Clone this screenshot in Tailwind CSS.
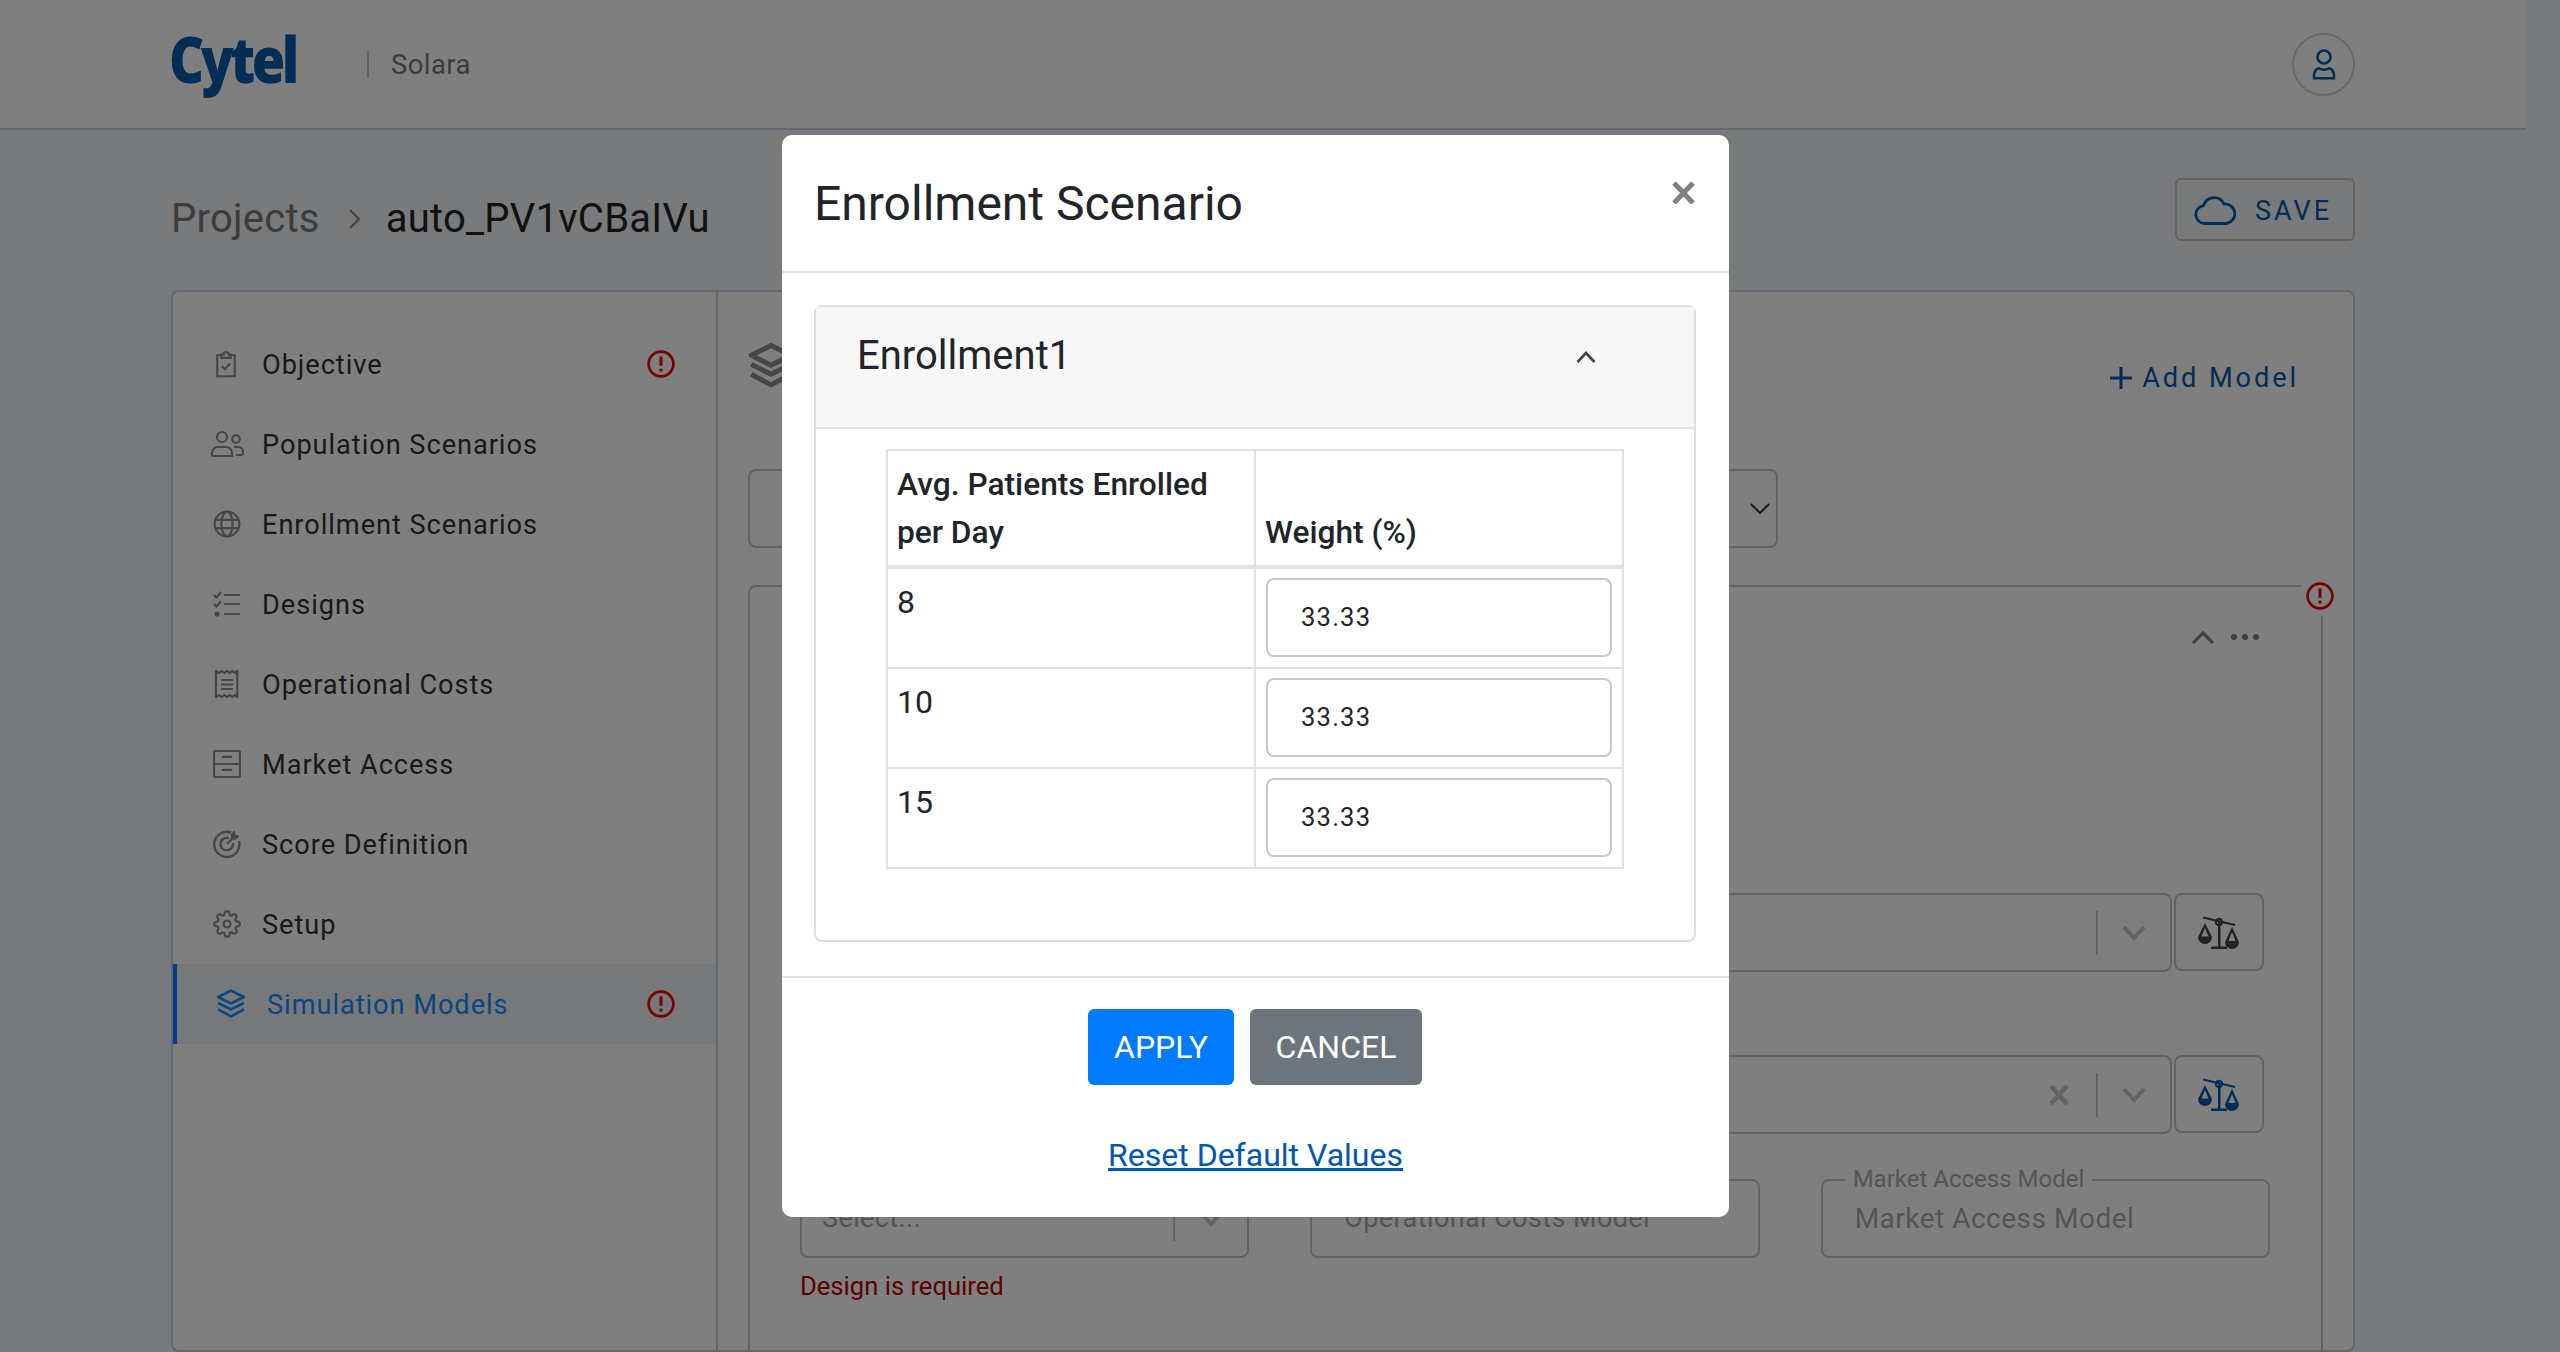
<!DOCTYPE html>
<html lang="en"><head><meta charset="utf-8"><title>Solara</title>
<script src="https://cdn.jsdelivr.net/npm/@tailwindcss/browser@4"></script></head>
<body class="font-['Roboto',sans-serif]">
<div class="relative h-[1352px] w-[2560px] overflow-hidden bg-[#f1f4f8]">
  <div class="w-[2526px]">
    <header class="flex h-[130px] items-center justify-between border-b-2 border-[#bed4e6] bg-white pl-[169px] pr-[171px]">
      <div class="flex items-center">
        <span class="w-[127px] origin-left -translate-y-[6px] scale-x-[0.86] font-['Open_Sans',sans-serif] text-[63px] leading-none font-extrabold tracking-[-4px] whitespace-nowrap text-[#045aa8]">Cytel</span>
        <span class="ml-[71px] h-[27px] w-[2px] bg-[#c8c8c8]"></span>
        <span class="ml-[22px] mt-[2px] text-[27.500px] tracking-[0.4px] text-[#777]">Solara</span>
      </div>
      <div class="flex h-[63px] w-[63px] items-center justify-center rounded-full border-2 border-[#bed4e6] text-[#045aa8]">
        <svg class="h-[34px] w-[34px]" viewBox="0 0 24 24" fill="none" stroke="currentColor" stroke-width="1.8"><circle cx="12" cy="7" r="4.6"/><path d="M5 22v-2.5a5 5 0 0 1 3.5-4.5c2 1.3 5 1.3 7 0a5 5 0 0 1 3.5 4.5V22z"/></svg>
      </div>
    </header>
    <div class="flex h-[160px] items-start justify-between pl-[171px] pr-[171px] pt-[48px]">
      <div class="mt-[9px] flex h-[63px] items-center text-[40px] tracking-[0.25px]">
        <span class="text-[#787878]">Projects</span>
        <svg class="ml-[28px] mr-[24px] h-[24px] w-[14px] text-[#888]" viewBox="0 0 14 24" fill="none" stroke="currentColor" stroke-width="2.4"><path d="M2 3l9 9-9 9"/></svg>
        <span class="text-[#222]">auto_PV1vCBaIVu</span>
      </div>
      <button class="flex h-[63px] w-[180px] items-center rounded-[6px] border-2 border-[#c4c4c4] pl-[17px] text-[27px] tracking-[3px] text-[#045aa8]">
        <svg class="h-[30px] w-[42px]" viewBox="0 0 42 30" fill="none" stroke="currentColor" stroke-width="2.8"><path d="M11 28.5a9 9 0 0 1-1.5-17.9A11 11 0 0 1 30 9a9.8 9.8 0 0 1 2 19.5z"/></svg>
        <span class="ml-[19px] mt-[4px]">SAVE</span>
      </button>
    </div>
    <main class="mx-[171px] flex h-[1062px] rounded-[8px] border-2 border-[#bed4e6] bg-white">
      <nav class="w-[545px] shrink-0 border-r-2 border-[#bed4e6] pt-[32px] text-[27.200px] tracking-[0.95px] text-[#333]">
        <a class="flex h-[80px] items-center pl-[39px] pr-[41px]"><svg class="h-[28px] w-[28px] text-[#8c8c8c]" viewBox="0 0 24 24" fill="none" stroke="currentColor" stroke-width="1.9"><path d="M8 4.5H4.5v18h15v-18H16"/><path d="M8 3.8h2a2 2 0 0 1 4 0h2v3H8z"/><path d="M8.5 14l2.5 2.5 4.5-5"/></svg><span class="ml-[22px] flex-1 pt-[2px]">Objective</span><svg class="h-[28px] w-[28px] text-[#f00000]" viewBox="0 0 24 24" fill="none" stroke="currentColor" stroke-width="2.300"><circle cx="12" cy="12" r="10.6"/><path d="M12 5.5v8" stroke-width="2.6"/><path d="M12 16v2.500" stroke-width="2.6"/></svg></a>
        <a class="flex h-[80px] items-center pl-[37px] pr-[41px]"><svg class="h-[28px] w-[34px] text-[#8c8c8c]" viewBox="0 0 34 28" fill="none" stroke="currentColor" stroke-width="2.2"><circle cx="12" cy="7" r="5"/><circle cx="26" cy="9" r="3.8"/><path d="M2 25v-2a6 6 0 0 1 6-6h8a6 6 0 0 1 6 6v3H3a1 1 0 0 1-1-1z"/><path d="M24 17h4a5 5 0 0 1 5 5v1.500a1.500 1.500 0 0 1-1.500 1.500H26"/></svg><span class="ml-[18px] flex-1 pt-[2px]">Population Scenarios</span></a>
        <a class="flex h-[80px] items-center pl-[40px] pr-[41px]"><svg class="h-[28px] w-[28px] text-[#8c8c8c]" viewBox="0 0 24 24" fill="none" stroke="currentColor" stroke-width="1.9"><circle cx="12" cy="12" r="10.600"/><ellipse cx="12" cy="12" rx="4.800" ry="10.600"/><path d="M2 8.500h20M2 15.500h20"/></svg><span class="ml-[21px] flex-1 pt-[2px]">Enrollment Scenarios</span></a>
        <a class="flex h-[80px] items-center pl-[40px] pr-[41px]"><svg class="h-[28px] w-[28px] text-[#8c8c8c]" viewBox="0 0 28 28" fill="none" stroke="currentColor" stroke-width="2.2"><path d="M1 5l2.500 2.500L8 2M1 14l2.500 2.500L8 11"/><circle cx="4" cy="24" r="1.500" fill="currentColor"/><path d="M11 5h16M11 14h16M11 24h16"/></svg><span class="ml-[21px] flex-1 pt-[2px]">Designs</span></a>
        <a class="flex h-[80px] items-center pl-[40px] pr-[41px]"><svg class="h-[28px] w-[28px] text-[#8c8c8c]" viewBox="0 0 28 28" fill="none" stroke="currentColor" stroke-width="2.2"><path d="M3 1v26l3-2 2.700 2 2.700-2 2.700 2 2.700-2 2.700 2 2.800-2 2 2V1l-2 2-2.800-2-2.700 2-2.700-2-2.700 2-2.700-2-2.700 2z"/><path d="M8 10h12M8 14.500h12M8 19h12"/></svg><span class="ml-[21px] flex-1 pt-[2px]">Operational Costs</span></a>
        <a class="flex h-[80px] items-center pl-[40px] pr-[41px]"><svg class="h-[28px] w-[28px] text-[#8c8c8c]" viewBox="0 0 28 28" fill="none" stroke="currentColor" stroke-width="2.2"><rect x="1" y="1" width="26" height="26" rx="1.500"/><path d="M1 14h26M10 8V6.800h8V8M10 21v-1.200h8V21"/></svg><span class="ml-[21px] flex-1 pt-[2px]">Market Access</span></a>
        <a class="flex h-[80px] items-center pl-[40px] pr-[41px]"><svg class="h-[28px] w-[28px] text-[#8c8c8c]" viewBox="0 0 28 28" fill="none" stroke="currentColor" stroke-width="2.4"><path d="M18 2.500A12.600 12.600 0 1 0 26 11"/><path d="M16 8.200a6.300 6.300 0 1 0 4 5"/><path d="M14 14l8-8" /><path d="M21 1l1 4 4 1-3.500 3.500-3.500-1-1-3.500z" fill="currentColor" stroke-width="1"/></svg><span class="ml-[21px] flex-1 pt-[2px]">Score Definition</span></a>
        <a class="flex h-[80px] items-center pl-[40px] pr-[41px]"><svg class="h-[28px] w-[28px] text-[#8c8c8c]" viewBox="0 0 24 24" fill="none" stroke="currentColor" stroke-width="1.900"><circle cx="12" cy="12" r="3"/><path d="M19.400 15a1.650 1.650 0 0 0 .33 1.820l.06.060a2 2 0 0 1 0 2.830 2 2 0 0 1-2.830 0l-.06-.060a1.650 1.650 0 0 0-1.820-.33 1.650 1.650 0 0 0-1 1.510V21a2 2 0 0 1-2 2 2 2 0 0 1-2-2v-.090A1.650 1.650 0 0 0 9 19.400a1.650 1.650 0 0 0-1.820.33l-.06.060a2 2 0 0 1-2.830 0 2 2 0 0 1 0-2.830l.06-.060a1.650 1.650 0 0 0 .33-1.820 1.650 1.650 0 0 0-1.510-1H3a2 2 0 0 1-2-2 2 2 0 0 1 2-2h.090A1.650 1.650 0 0 0 4.600 9a1.650 1.650 0 0 0-.33-1.820l-.06-.060a2 2 0 0 1 0-2.830 2 2 0 0 1 2.830 0l.06.060a1.650 1.650 0 0 0 1.820.33H9a1.650 1.650 0 0 0 1-1.510V3a2 2 0 0 1 2-2 2 2 0 0 1 2 2v.090a1.650 1.650 0 0 0 1 1.510 1.650 1.650 0 0 0 1.820-.33l.06-.060a2 2 0 0 1 2.830 0 2 2 0 0 1 0 2.830l-.06.060a1.650 1.650 0 0 0-.33 1.820V9a1.650 1.650 0 0 0 1.510 1H21a2 2 0 0 1 2 2 2 2 0 0 1-2 2h-.090a1.650 1.650 0 0 0-1.510 1z"/></svg><span class="ml-[21px] flex-1 pt-[2px]">Setup</span></a>
        <a class="flex h-[80px] items-center border-l-4 border-[#0080ff] bg-[#edf0f4] pl-[39px] pr-[41px] text-[#168cff]"><svg class="h-[30px] w-[30px]" viewBox="0 0 28 28" fill="none" stroke="currentColor" stroke-width="2.500" stroke-linejoin="round"><path d="M14 1.500L26 7.500 14 13.500 2 7.500z"/><path d="M2 13l12 6 12-6"/><path d="M2 19l12 6.500L26 19"/></svg><span class="ml-[21px] flex-1 pt-[2px]">Simulation Models</span><svg class="h-[28px] w-[28px] text-[#f00000]" viewBox="0 0 24 24" fill="none" stroke="currentColor" stroke-width="2.300"><circle cx="12" cy="12" r="10.600"/><path d="M12 5.500v8" stroke-width="2.600"/><path d="M12 16v2.500" stroke-width="2.600"/></svg></a>
      </nav>
      <section class="min-w-0 flex-1 pl-[30px] pr-[30px] pt-[30px]">
        <div class="flex h-[147px] items-start justify-between pr-[24px]">
          <svg class="mt-[20px] h-[48px] w-[46px] text-[#8c8c8c]" viewBox="0 0 28 28" fill="none" stroke="currentColor" stroke-width="3" stroke-linejoin="round"><path d="M14 1.500L26 7.500 14 13.500 2 7.500z"/><path d="M2 13l12 6 12-6"/><path d="M2 19l12 6.500L26 19"/></svg>
          <div class="mt-[32px] flex h-[48px] items-center text-[27.200px] tracking-[2.900px] text-[#045aa8]"><svg class="mr-[10px] h-[22px] w-[22px]" viewBox="0 0 22 22" fill="none" stroke="currentColor" stroke-width="3"><path d="M11 0v22M0 11h22"/></svg>Add Model</div>
        </div>
        <div class="flex h-[79px] w-[1030px] items-center justify-end rounded-[8px] border-2 border-[#c4c4c4] pr-[6px] text-[#333]">
          <svg class="h-[18px] w-[20px]" viewBox="0 0 20 18" fill="none" stroke="currentColor" stroke-width="2"><path d="M1 4l9 9 9-9"/></svg>
        </div>
        <div class="relative mt-[37px] h-[800px] rounded-[8px] border-2 border-[#c4c4c4]">
          <span class="absolute -right-[18px] -top-[11px] flex h-[40px] w-[38px] items-center justify-center bg-white pr-[1px] text-[#f00000]">
            <svg class="h-[30px] w-[28px]" viewBox="0 0 24 24" fill="none" stroke="currentColor" stroke-width="2.300"><circle cx="12" cy="12" r="10.600"/><path d="M12 5.500v8" stroke-width="2.600"/><path d="M12 16v2.500" stroke-width="2.600"/></svg>
          </span>
          <div class="flex h-[100px] items-center justify-end pr-[62px] text-[#808080]">
            <svg class="h-[14px] w-[22px]" viewBox="0 0 22 14" fill="none" stroke="currentColor" stroke-width="3.200"><path d="M1 13L11 3l10 10"/></svg>
            <svg class="ml-[17px] h-[6px] w-[28px]" viewBox="0 0 28 6" fill="currentColor"><circle cx="3" cy="3" r="3"/><circle cx="14" cy="3" r="3"/><circle cx="25" cy="3" r="3"/></svg>
          </div>
          <div class="ml-[50px] mt-[206px] w-[1464px]">
            <div class="flex h-[79px] gap-[2px]">
              <div class="flex flex-1 items-center justify-end rounded-[8px] border-2 border-[#c4c4c4] text-[#c4c4c4]">
                <span class="h-[44px] w-[2px] bg-[#c4c4c4]"></span>
                <span class="flex w-[72px] justify-center"><svg class="h-[16px] w-[24px]" viewBox="0 0 24 16" fill="none" stroke="currentColor" stroke-width="4"><path d="M2 2l10 11L22 2"/></svg></span>
              </div>
              <div class="flex h-[78px] w-[90px] items-center justify-center rounded-[8px] border-2 border-[#c4c4c4] text-[#444]">
                <svg class="mt-[1px] h-[36px] w-[42px]" viewBox="0 0 42 34" fill="currentColor"><path d="M20 5h2.500v26H20z"/><path d="M13 33v-2.500h16V33z"/><circle cx="21" cy="6" r="3.200" fill="none" stroke="currentColor" stroke-width="2"/><path d="M5 1.500l32 7.500" stroke="currentColor" stroke-width="2.200"/><path fill-rule="evenodd" d="M7 7L0 21a7 7 0 0 0 14 0zm0 5l3.500 8.500h-7z"/><path fill-rule="evenodd" d="M34 11l-7 15a7 7 0 0 0 14 0zm0 5l3.500 9h-7z"/></svg>
              </div>
            </div>
            <div class="mt-[83px] flex h-[79px] gap-[2px]">
              <div class="flex flex-1 items-center justify-end rounded-[8px] border-2 border-[#c4c4c4] text-[#c4c4c4]">
                <svg class="mr-[27px] h-[20px] w-[20px]" viewBox="0 0 20 20" fill="none" stroke="currentColor" stroke-width="4.500"><path d="M2 1l16 18M18 1L2 19"/></svg>
                <span class="h-[44px] w-[2px] bg-[#c4c4c4]"></span>
                <span class="flex w-[72px] justify-center"><svg class="h-[16px] w-[24px]" viewBox="0 0 24 16" fill="none" stroke="currentColor" stroke-width="4"><path d="M2 2l10 11L22 2"/></svg></span>
              </div>
              <div class="flex h-[78px] w-[90px] items-center justify-center rounded-[8px] border-2 border-[#c4c4c4] text-[#045aa8]">
                <svg class="mt-[1px] h-[36px] w-[42px]" viewBox="0 0 42 34" fill="currentColor"><path d="M20 5h2.500v26H20z"/><path d="M13 33v-2.500h16V33z"/><circle cx="21" cy="6" r="3.200" fill="none" stroke="currentColor" stroke-width="2"/><path d="M5 1.500l32 7.500" stroke="currentColor" stroke-width="2.200"/><path fill-rule="evenodd" d="M7 7L0 21a7 7 0 0 0 14 0zm0 5l3.500 8.500h-7z"/><path fill-rule="evenodd" d="M34 11l-7 15a7 7 0 0 0 14 0zm0 5l3.500 9h-7z"/></svg>
              </div>
            </div>
            <div class="mt-[45px] grid w-[1470px] grid-cols-3 gap-x-[61px]">
              <div>
                <div class="flex h-[79px] items-center rounded-[8px] border-2 border-[#c4c4c4] pl-[20px] text-[27px] tracking-[0.4px] text-[#a8a8a8]">
                  <span class="flex-1">Select...</span><span class="h-[44px] w-[2px] bg-[#c4c4c4]"></span>
                  <span class="flex w-[72px] justify-center text-[#c4c4c4]"><svg class="h-[16px] w-[24px]" viewBox="0 0 24 16" fill="none" stroke="currentColor" stroke-width="4"><path d="M2 2l10 11L22 2"/></svg></span>
                </div>
                <p class="mt-[9px] text-[25.600px] text-[#bb0000]">Design is required</p>
              </div>
              <div class="flex h-[79px] items-center rounded-[8px] border-2 border-[#c4c4c4] pl-[32px] text-[27px] tracking-[0.4px] text-[#a8a8a8]">Operational Costs Model</div>
              <fieldset class="relative h-[79px] rounded-[8px] border-2 border-[#c4c4c4] pl-[32px] text-[#a8a8a8]">
                <legend class="absolute -top-[16px] left-[22px] bg-white px-[8px] text-[24px] leading-[28px] text-[#aaa]">Market Access Model</legend>
                <div class="flex h-[75px] items-center text-[28px] tracking-[0.5px]">Market Access Model</div>
              </fieldset>
            </div>
          </div>
        </div>
      </section>
    </main>
  </div>
  <div class="absolute inset-0 bg-black/50"></div>
  <div role="dialog" class="absolute left-[782px] top-[135px] h-[1082px] w-[947px] rounded-[10px] bg-white text-[#212529]">
    <div class="relative h-[138px] border-b-2 border-[#dee2e6] pl-[32px] pt-[36px]">
      <h2 class="text-[48px] leading-[66px] font-normal">Enrollment Scenario</h2>
      <svg class="absolute right-[34px] top-[47px] h-[22px] w-[23px] text-[#808080]" viewBox="0 0 23 22" fill="none" stroke="currentColor" stroke-width="5"><path d="M2 1l19 20M21 1L2 21"/></svg>
    </div>
    <div class="ml-[32px] mr-[33px] mt-[32px] h-[637px] rounded-[8px] border-2 border-[#dfdfdf]">
      <div class="relative h-[122px] border-b-2 border-[#dfdfdf] bg-[#f7f7f7] pl-[41px] pt-[21px]">
        <h3 class="text-[40px] leading-[56px] font-normal">Enrollment1</h3>
        <svg class="absolute right-[98px] top-[43px] h-[14px] w-[20px] text-[#444]" viewBox="0 0 20 14" fill="none" stroke="currentColor" stroke-width="2.600"><path d="M1.500 12L10 3l8.500 9"/></svg>
      </div>
      <table class="ml-[70px] mt-[20px] w-[738px] table-fixed border-collapse text-[32px]">
        <colgroup><col class="w-[368px]"><col></colgroup>
        <thead><tr>
          <th class="border-2 border-b-4 border-[#dee2e6] px-[9px] pb-[8px] pt-[10px] text-left align-bottom text-[31.700px] leading-[48px] font-medium">Avg. Patients Enrolled per Day</th>
          <th class="border-2 border-b-4 border-[#dee2e6] px-[9px] pb-[8px] text-left align-bottom text-[31.700px] leading-[48px] font-medium">Weight (%)</th>
        </tr></thead>
        <tbody>
          <tr><td class="border-2 border-[#dee2e6] px-[9px] pb-[10px] pt-[9px] align-top leading-[48px]">8</td><td class="border-2 border-[#dee2e6] px-[10px] pb-[10px] pt-[9px]"><div class="flex h-[79px] items-center rounded-[8px] border-2 border-[#c8c8c8] pl-[33px] text-[25.600px] tracking-[1.200px]">33.33</div></td></tr>
          <tr><td class="border-2 border-[#dee2e6] px-[9px] pb-[10px] pt-[9px] align-top leading-[48px]">10</td><td class="border-2 border-[#dee2e6] px-[10px] pb-[10px] pt-[9px]"><div class="flex h-[79px] items-center rounded-[8px] border-2 border-[#c8c8c8] pl-[33px] text-[25.600px] tracking-[1.200px]">33.33</div></td></tr>
          <tr><td class="border-2 border-[#dee2e6] px-[9px] pb-[10px] pt-[9px] align-top leading-[48px]">15</td><td class="border-2 border-[#dee2e6] px-[10px] pb-[10px] pt-[9px]"><div class="flex h-[79px] items-center rounded-[8px] border-2 border-[#c8c8c8] pl-[33px] text-[25.600px] tracking-[1.200px]">33.33</div></td></tr>
        </tbody>
      </table>
    </div>
    <div class="mt-[34px] border-t-2 border-[#dee2e6] pt-[31px] text-center">
      <div class="flex justify-center gap-[16px] pr-[1px]">
        <button class="h-[76px] w-[146px] rounded-[6px] bg-[#007bff] text-[32px] text-white">APPLY</button>
        <button class="h-[76px] w-[172px] rounded-[6px] bg-[#6c757d] text-[32px] text-white">CANCEL</button>
      </div>
      <a class="mt-[46px] inline-block text-[32px] leading-[48px] text-[#0056b3] underline">Reset Default Values</a>
    </div>
  </div>
</div>
</body></html>
